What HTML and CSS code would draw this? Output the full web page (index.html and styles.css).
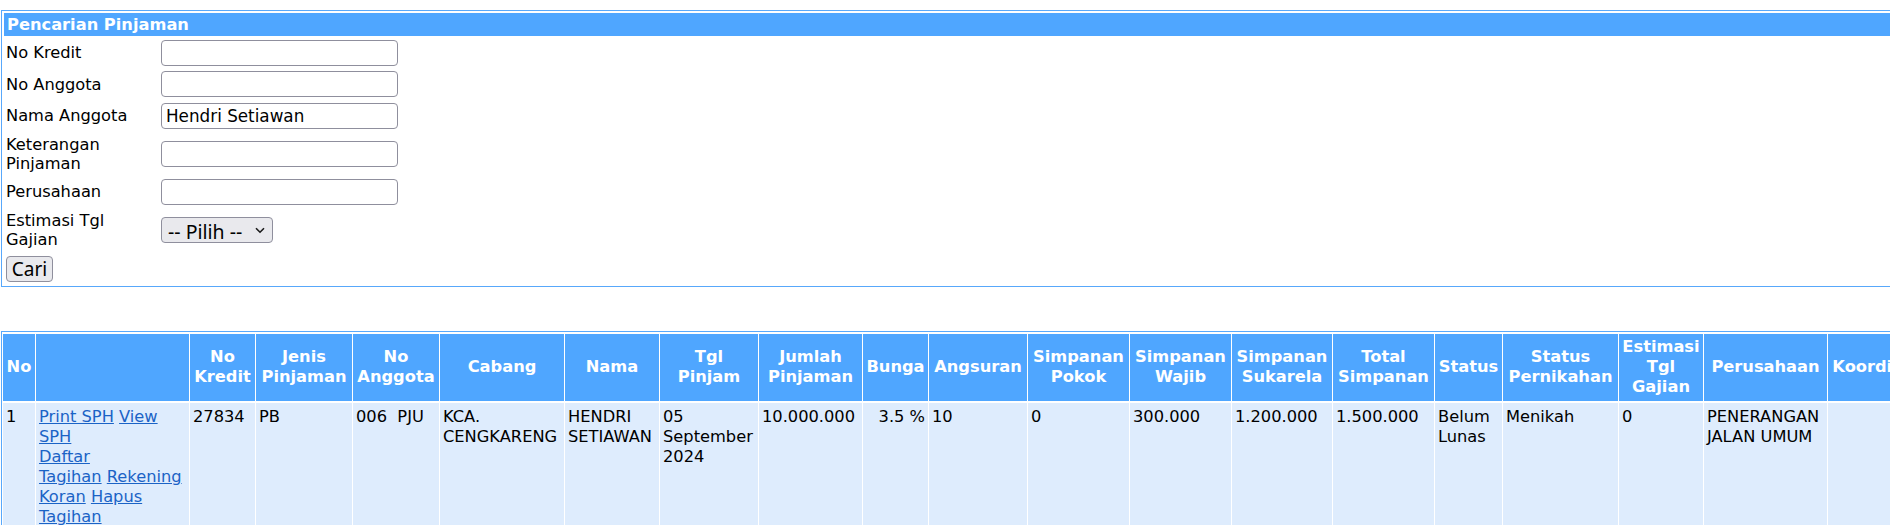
FILE: index.html
```html
<!DOCTYPE html>
<html lang="id">
<head>
<meta charset="utf-8">
<title>Pencarian Pinjaman</title>
<link rel="stylesheet" href="styles.css">
</head>
<body>
<div class="page">
  <form class="search-form">
    <table class="search">
      <tr><td colspan="2" class="search-title">Pencarian Pinjaman</td></tr>
      <tr><td class="lbl">No Kredit</td><td class="fld"><input type="text" class="txt"></td></tr>
      <tr><td class="lbl">No Anggota</td><td class="fld"><input type="text" class="txt"></td></tr>
      <tr><td class="lbl">Nama Anggota</td><td class="fld"><input type="text" class="txt" value="Hendri Setiawan"></td></tr>
      <tr><td class="lbl">Keterangan Pinjaman</td><td class="fld"><input type="text" class="txt"></td></tr>
      <tr><td class="lbl">Perusahaan</td><td class="fld"><input type="text" class="txt"></td></tr>
      <tr><td class="lbl">Estimasi Tgl Gajian</td><td class="fld">
        <span class="sel"><select><option>-- Pilih --</option></select><svg class="chev" viewBox="0 0 10 7" width="10" height="7"><polyline points="1,1.2 5,5.2 9,1.2" fill="none" stroke="#1a1a1a" stroke-width="1.6"/></svg></span>
      </td></tr>
      <tr><td colspan="2" class="act"><button type="button" class="btn">Cari</button></td></tr>
    </table>
  </form>

  <table class="data">
    <thead>
      <tr>
        <th class="w-no">No</th>
        <th class="w-act"></th>
        <th class="w-kredit">No Kredit</th>
        <th class="w-jenis">Jenis Pinjaman</th>
        <th class="w-ang">No Anggota</th>
        <th class="w-cabang">Cabang</th>
        <th class="w-nama">Nama</th>
        <th class="w-tgl">Tgl Pinjam</th>
        <th class="w-jml">Jumlah Pinjaman</th>
        <th class="w-bunga">Bunga</th>
        <th class="w-angs">Angsuran</th>
        <th class="w-sp">Simpanan Pokok</th>
        <th class="w-sw">Simpanan Wajib</th>
        <th class="w-ss">Simpanan Sukarela</th>
        <th class="w-ts">Total Simpanan</th>
        <th class="w-status">Status</th>
        <th class="w-nikah">Status Pernikahan</th>
        <th class="w-est">Estimasi Tgl Gajian</th>
        <th class="w-per">Perusahaan</th>
        <th class="w-koord">Koordinator</th>
      </tr>
    </thead>
    <tbody>
      <tr>
        <td>1</td>
        <td><a href="#">Print SPH</a> <a href="#">View SPH</a><br><a href="#">Daftar<br>Tagihan</a> <a href="#">Rekening Koran</a> <a href="#">Hapus Tagihan</a></td>
        <td>27834</td>
        <td>PB</td>
        <td>006&nbsp; PJU</td>
        <td>KCA. CENGKARENG</td>
        <td>HENDRI SETIAWAN</td>
        <td>05 September 2024</td>
        <td>10.000.000</td>
        <td class="num">3.5 %</td>
        <td>10</td>
        <td>0</td>
        <td>300.000</td>
        <td>1.200.000</td>
        <td>1.500.000</td>
        <td>Belum Lunas</td>
        <td>Menikah</td>
        <td>0</td>
        <td>PENERANGAN JALAN UMUM</td>
        <td></td>
      </tr>
    </tbody>
  </table>
</div>
</body>
</html>
```

FILE: styles.css
```css
html, body {
  margin: 0;
  padding: 0;
  background: #ffffff;
  overflow: hidden;
}

body {
  font-family: "DejaVu Sans", Verdana, sans-serif;
  font-size: 16.25px;
  color: #000;
}

.page {
  width: max-content;
  padding: 10px 0 0 1px;
}

.search-form {
  margin: 0;
}

.search {
  width: 100%;
  border: 1px solid #58a8fb;
  border-spacing: 2px;
}

.search td {
  padding: 1.8px 2px;
  line-height: 19.5px;
  vertical-align: middle;
}

.search td.search-title {
  background: #4fa6ff;
  color: #fff;
  font-weight: bold;
  padding: 2px 3px;
  line-height: 19px;
}

.search td.lbl {
  width: 149px;
}

.search td.act {
  padding: 2px 2px 2px;
}

.txt {
  display: block;
  box-sizing: border-box;
  width: 237px;
  height: 26px;
  margin: 0;
  border: 1px solid #8f8f9d;
  border-radius: 4px;
  padding: 0 4px;
  background: #fff;
  font-family: "DejaVu Sans", Verdana, sans-serif;
  font-size: 16.8px;
  color: #000;
}

.sel {
  position: relative;
  display: block;
  width: 112px;
  height: 26px;
}

.sel select {
  appearance: none;
  -webkit-appearance: none;
  display: block;
  box-sizing: border-box;
  width: 100%;
  height: 100%;
  margin: 0;
  background: #e9e9ed;
  border: 1px solid #8f8f9d;
  border-radius: 4px;
  padding: 0 0 0 6px;
  font-family: "Noto Sans", "Open Sans", sans-serif;
  font-size: 19.5px;
  color: #000;
}

.sel .chev {
  position: absolute;
  right: 8px;
  top: 10px;
  pointer-events: none;
}

.btn {
  display: block;
  box-sizing: border-box;
  width: 47px;
  height: 26px;
  margin: 0;
  padding: 0;
  background: #e9e9ed;
  border: 1px solid #8f8f9d;
  border-radius: 4px;
  font-family: "Noto Sans", "Open Sans", sans-serif;
  font-size: 19px;
  line-height: 22px;
  color: #000;
}

/* data table */
.data {
  margin-top: 44px;
  border: 1px solid #58a8fb;
  border-spacing: 1px 2px;
}

.data th,
.data td {
  box-sizing: border-box;
  padding: 3px;
  line-height: 20px;
}

.data th {
  background: #4fa6ff;
  color: #fff;
  font-weight: bold;
  text-align: center;
  vertical-align: middle;
  padding: 3.5px 3px;
}

.data td {
  background: #deecfd;
  vertical-align: top;
  text-align: left;
  padding-top: 4.5px;
}

.data td.num {
  text-align: right;
}

.data a {
  color: #1b63c6;
  text-decoration: underline;
}

.w-no { width: 32px; }
.w-act { width: 153px; }
.w-kredit { width: 65px; }
.w-jenis { width: 96px; }
.w-ang { width: 86px; }
.w-cabang { width: 124px; }
.w-nama { width: 94px; }
.w-tgl { width: 98px; }
.w-jml { width: 103px; }
.w-bunga { width: 65px; }
.w-angs { width: 98px; }
.w-sp { width: 101px; }
.w-sw { width: 101px; }
.w-ss { width: 100px; }
.w-ts { width: 101px; }
.w-status { width: 67px; }
.w-nikah { width: 115px; }
.w-est { width: 84px; }
.w-per { width: 123px; }
.w-koord { width: 118px; }
```
